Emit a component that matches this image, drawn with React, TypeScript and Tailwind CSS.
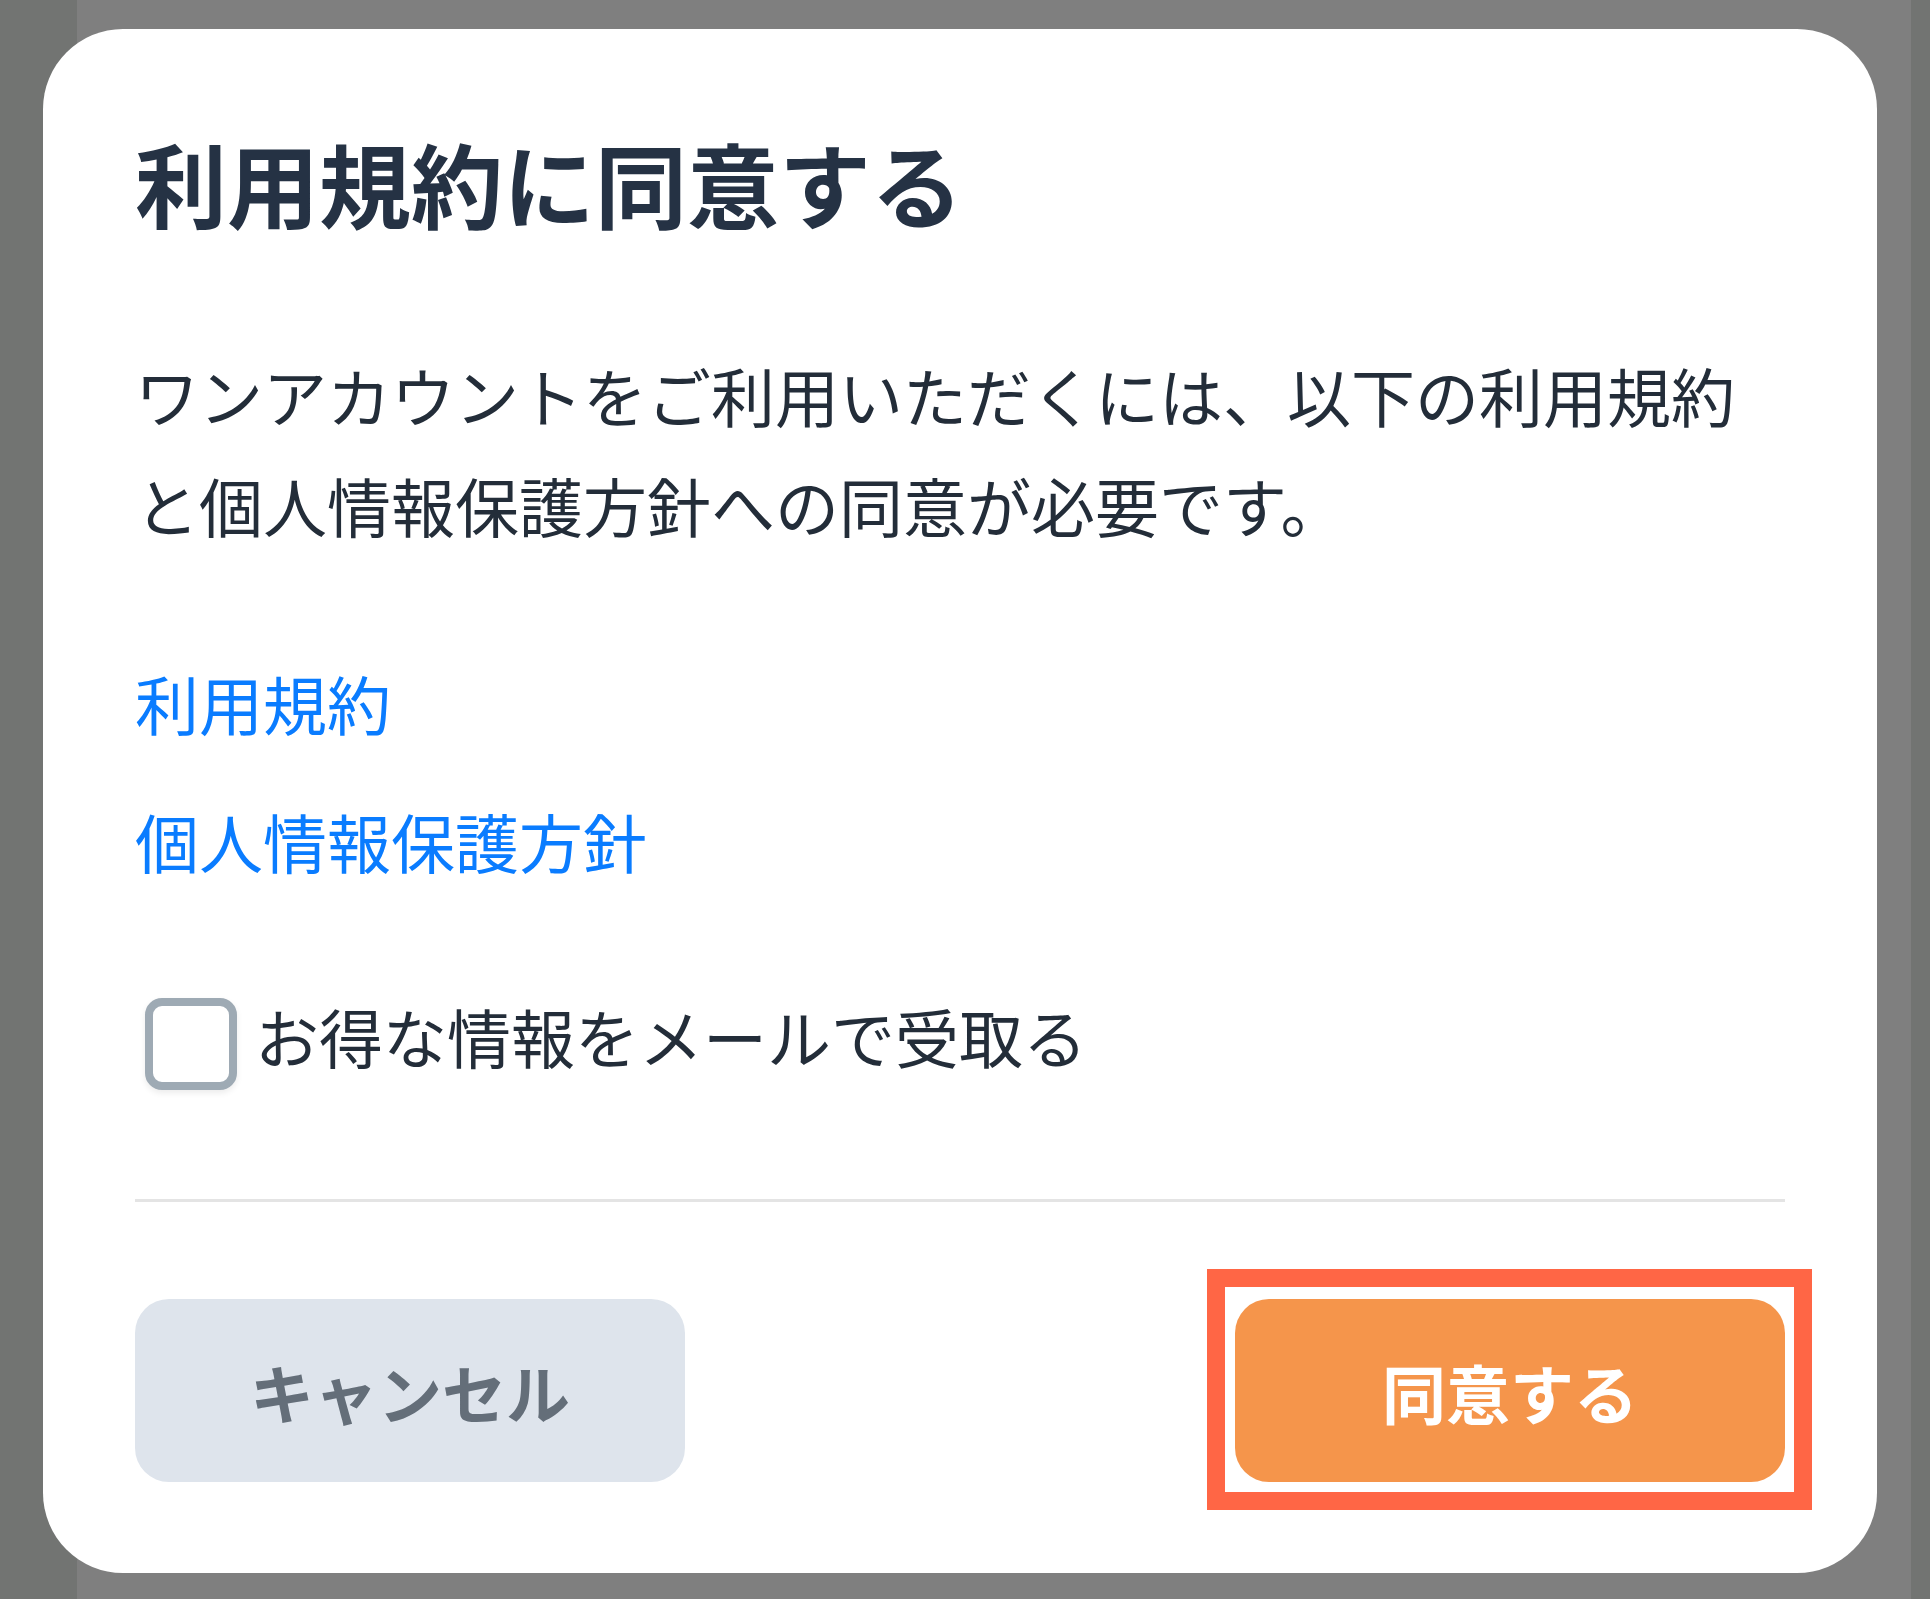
import { useState } from "react"

const font = { fontFamily: '"Noto Sans CJK JP", "Noto Sans", sans-serif' }

export default function App() {
  const [optIn, setOptIn] = useState(false)

  return (
    <main
      className="relative w-[1930px] h-[1599px] overflow-hidden bg-[#7f7f7f] pl-[43px] pt-[29px]"
      style={font}
    >
      {/* darker backdrop edges */}
      <div className="absolute left-0 top-0 h-full w-[77px] bg-[#727472]" />
      <div className="absolute right-0 top-0 h-full w-[19px] bg-[#727472]" />

      <div className="relative flex w-[1834px] h-[1544px] flex-col rounded-[80px] bg-white px-[92px] pt-[107px] pb-[91px]">
        <h1 className="text-[92px] font-bold leading-none text-[#253244]">利用規約に同意する</h1>

        <p className="mt-[111px] text-[64px] leading-[110px] text-[#232d39]">
          ワンアカウントをご利用いただくには、以下の利用規約と個人情報保護方針への同意が必要です。
        </p>

        <a href="#" className="mt-[88px] self-start text-[64px] leading-[110px] text-[#0a7cff]">
          利用規約
        </a>
        <a href="#" className="mt-[28px] self-start text-[64px] leading-[110px] text-[#0a7cff]">
          個人情報保護方針
        </a>

        <label className="mt-[85px] flex items-start gap-[18px] cursor-pointer">
          <button
            type="button"
            onClick={() => setOptIn(!optIn)}
            className="ml-[10px] mt-[18px] h-[92px] w-[92px] shrink-0 rounded-[17px] border-[8px] border-[#9eaab4] bg-white shadow-[0_3px_6px_rgba(0,0,0,0.08)]"
          />
          <span className="text-[64px] leading-[110px] text-[#232d39]">お得な情報をメールで受取る</span>
        </label>

        <div className="mt-[109px] h-[3px] w-full bg-[#e4e4e4]" />

        <div className="mt-[97px] flex justify-between">
          <button className="flex h-[183px] w-[550px] items-center justify-center rounded-[34px] bg-[#dee4ec] text-[64px] font-bold text-[#646e79]">
            キャンセル
          </button>
          <div className="relative">
            <button className="flex h-[183px] w-[550px] items-center justify-center rounded-[34px] bg-[#f5954b] text-[64px] font-bold text-white">
              同意する
            </button>
            <div className="pointer-events-none absolute -left-[28px] -top-[30px] -right-[27px] -bottom-[28px] border-[18px] border-[#ff6645]" />
          </div>
        </div>
      </div>
    </main>
  )
}
